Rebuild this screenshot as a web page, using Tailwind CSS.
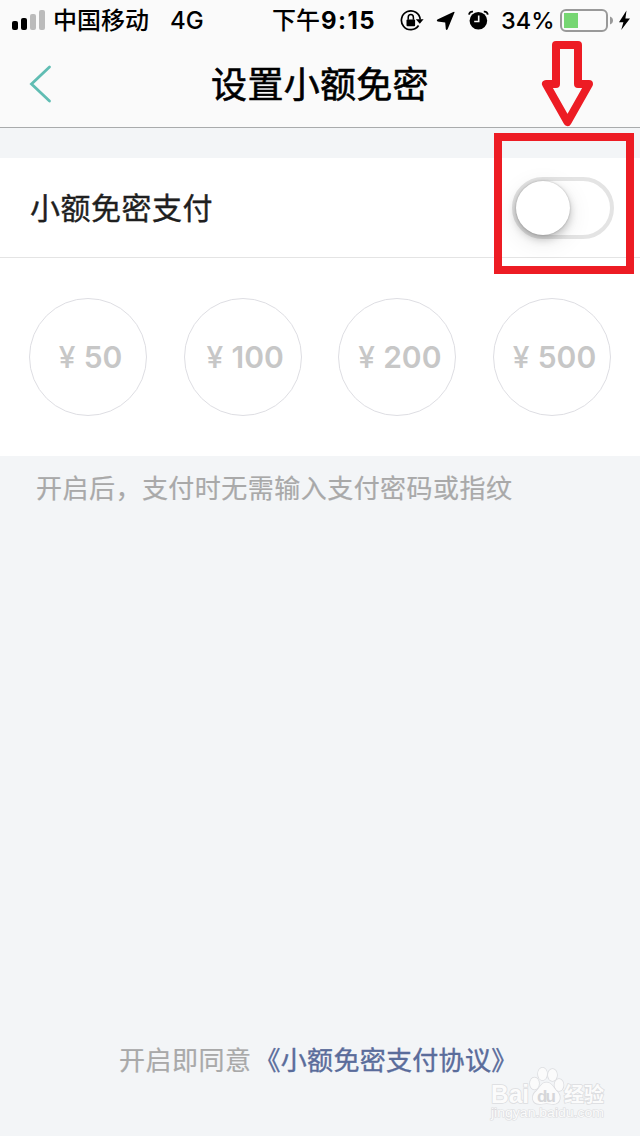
<!DOCTYPE html>
<html lang="zh-CN">
<head>
<meta charset="utf-8">
<title>设置小额免密</title>
<script src="https://cdn.jsdelivr.net/npm/@tailwindcss/browser@4"></script>
</head>
<body class="relative flex h-[1136px] w-[640px] flex-col overflow-hidden bg-[#f3f5f7] font-['Inter','Noto_Sans_CJK_SC',sans-serif] text-black">
  <header class="h-32 shrink-0 border-b border-[#a9abac] bg-[#fafafa]">
    <div class="flex h-10 items-center whitespace-nowrap text-[24px] font-medium leading-10">
      <svg class="ml-3 h-[22px] w-[34px] shrink-0" viewBox="0 0 34 22">
        <rect x="0" y="12" width="6" height="9" rx="2"/>
        <rect x="9" y="9" width="6" height="12" rx="2"/>
        <rect x="18" y="5" width="6" height="16" rx="2" fill="#bbb"/>
        <rect x="27" y="1" width="6" height="20" rx="2" fill="#bbb"/>
      </svg>
      <span class="ml-[7px] w-[117px] shrink-0 pt-0.5">中国移动</span>
      <span class="w-[102px] shrink-0 pt-0.5 text-[24px]">4G</span>
      <span class="w-[49px] shrink-0 pt-0.5">下午</span>
      <span class="w-[79px] shrink-0 pt-0.5 text-[24px] font-bold tracking-[1.4px]">9:15</span>
      <svg class="mt-px h-6 w-6 shrink-0" viewBox="0 0 24 24">
        <path d="M18.6 16.6A9.4 9.4 0 1 1 20.2 10.5" fill="none" stroke="#000" stroke-width="1.7"/>
        <path d="M15.8 10.2h7.8l-3.8 4.6z"/>
        <rect x="6.5" y="10.4" width="8.6" height="6.8" rx="1"/>
        <path d="M8.2 10.8V8.4a2.6 2.8 0 0 1 5.2 0v2.4" fill="none" stroke="#000" stroke-width="1.5"/>
      </svg>
      <svg class="ml-3 mt-px h-5 w-5 shrink-0" viewBox="0 0 20 20"><path d="M18.6 1.2 11.6 18.3Q10.4 20 9.8 18L9.2 11.4 1.6 10.4Q0 9.8 1.4 8.6L17.3 1Q18.6.5 18.6 1.2z"/></svg>
      <svg class="ml-[11px] h-5 w-6 shrink-0" viewBox="0 0 24 20">
        <circle cx="11.4" cy="10.7" r="8.8"/>
        <path d="M2 4.6C2.3 2.7 4 1.4 6 1.6M16.8 1.6c2-.2 3.7 1.1 4 3" fill="none" stroke="#000" stroke-width="1.8"/>
        <path d="M11.7 5.5v6H7.2" fill="none" stroke="#fafafa" stroke-width="1.6"/>
      </svg>
      <span class="ml-2.5 w-[59px] shrink-0 pt-0.5 text-[23.5px]">34%</span>
      <svg class="h-6 w-[72px] shrink-0" viewBox="0 0 72 24">
        <rect x="1" y="2" width="46" height="21" rx="5" fill="none" stroke="#999" stroke-width="2"/>
        <rect x="4" y="5" width="14" height="15" fill="#76d672"/>
        <path d="M50 8.5q3 1.2 3 4t-3 4z" fill="#999"/>
        <path d="M66.5 2.5 59 14.2h4.4L61.2 22l8.8-11.6h-4.6z"/>
      </svg>
    </div>
    <div class="relative flex h-[87px] items-center justify-center">
      <svg class="absolute left-[29px] top-[24px] h-10 w-6" viewBox="0 0 24 40"><path d="M20.5 3 2.5 20l18 17" fill="none" stroke="#60bdb3" stroke-width="2.8" stroke-linecap="round"/></svg>
      <h1 class="pt-[3px] text-[36px] font-normal leading-[82px] tracking-[0.3px] [-webkit-text-stroke:0.6px_#000]">设置小额免密</h1>
    </div>
  </header>

  <main class="mt-[30px] shrink-0 bg-white">
    <div class="flex h-[100px] items-center justify-between border-b border-[#e4e4e4] pl-[30px] pr-[26px]">
      <span class="text-[30px] font-normal leading-[44px] tracking-[0.5px] text-[#1f1f1f] [-webkit-text-stroke:0.4px_#1f1f1f]">小额免密支付</span>
      <div class="h-[62px] w-[102px] rounded-full border-4 border-[#e4e4e4]">
        <div class="size-[54px] rounded-full bg-white shadow-[0_4px_8px_rgba(0,0,0,0.22),0_0_2px_rgba(0,0,0,0.25),0_6px_24px_rgba(0,0,0,0.1)]"></div>
      </div>
    </div>
    <div class="flex h-[198px] justify-between px-[29px] pt-10 text-[30px] font-semibold text-[#c7c7c7]">
      <div class="flex size-[118px] items-center justify-center gap-2 rounded-full border border-[#dedee3] pl-[5px] pt-px"><span class="w-[17px] font-medium">¥</span><span>50</span></div>
      <div class="flex size-[118px] items-center justify-center gap-2 rounded-full border border-[#dedee3] pl-[5px] pt-px"><span class="w-[17px] font-medium">¥</span><span>100</span></div>
      <div class="flex size-[118px] items-center justify-center gap-2 rounded-full border border-[#dedee3] pl-[5px] pt-px"><span class="w-[17px] font-medium">¥</span><span>200</span></div>
      <div class="flex size-[118px] items-center justify-center gap-2 rounded-full border border-[#dedee3] pl-[5px] pt-px"><span class="w-[17px] font-medium">¥</span><span>500</span></div>
    </div>
  </main>

  <p class="mt-[13px] pl-9 text-[26px] leading-10 tracking-[0.47px] text-[#a9a9a9] [-webkit-text-stroke:0.2px_#a9a9a9]">开启后，支付时无需输入支付密码或指纹</p>

  <footer class="mb-[55px] mt-auto flex whitespace-nowrap pl-[119px] text-[26px] leading-10 tracking-[0.5px] text-[#a9a9a9] [-webkit-text-stroke:0.2px]">
    <span>开启即同意</span><a class="ml-[3px] tracking-[0.3px] text-[#5a6c9b] [-webkit-text-stroke:0.4px_#5a6c9b]">《小额免密支付协议》</a>
  </footer>

  <!-- watermark -->
  <svg class="absolute left-[484px] top-[1062px] h-[64px] w-[130px]" viewBox="0 0 130 64" fill="#fbfbfb" stroke="#dcdde0" stroke-width="1.6" paint-order="stroke" font-family="Liberation Sans, Noto Sans CJK SC, sans-serif">
    <text x="7" y="41" font-size="26" font-weight="700" textLength="38" lengthAdjust="spacingAndGlyphs">Bai</text>
    <ellipse cx="50.5" cy="21.5" rx="4.5" ry="6"/>
    <ellipse cx="58.5" cy="12" rx="4.5" ry="6.2"/>
    <ellipse cx="68.5" cy="13" rx="4.5" ry="6"/>
    <ellipse cx="75" cy="23" rx="4.5" ry="6"/>
    <path d="M62.5 20.5c5 0 6.5 4.5 10 8.5 5.5 4.5 4 13-3 13-3 0-4.5-.8-7-.8s-4 .8-7 .8c-8 0-8.5-9-3-13 3.5-3.5 5-8.5 10-8.5z"/>
    <text x="53" y="39.5" font-size="17" font-weight="700" fill="#d5d6d9" stroke="none" textLength="19">du</text>
    <text x="80" y="40" font-size="20" font-weight="700" textLength="40">经验</text>
    <text x="7" y="55" font-size="12.5" stroke-width="1.2" textLength="113" lengthAdjust="spacingAndGlyphs">jingyan.baidu.com</text>
  </svg>

  <!-- callout box and arrow over the switch -->
  <div class="absolute left-[494px] top-[133px] h-[141px] w-[140px] border-8 border-[#ed1c24]"></div>
  <svg class="absolute left-[540px] top-[40px] h-[88px] w-[56px]" viewBox="0 0 56 88"><path d="M16 5H38V44H49L27.5 82 6 44H16z" fill="none" stroke="#ed1c24" stroke-width="8" stroke-linejoin="round"/></svg>
</body>
</html>
